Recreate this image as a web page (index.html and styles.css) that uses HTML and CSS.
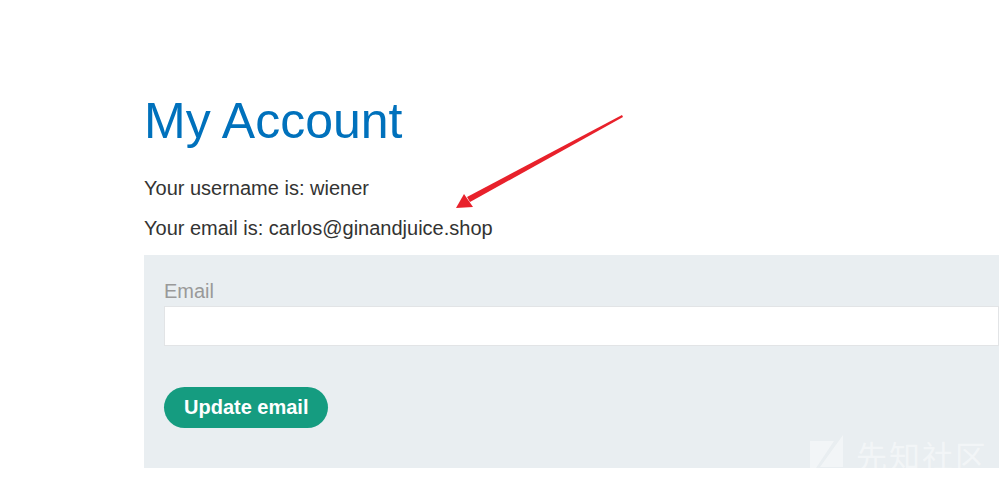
FILE: index.html
```html
<!DOCTYPE html>
<html>
<head>
<meta charset="utf-8">
<link rel="stylesheet" href="styles.css">
</head>
<body>
<div class="page">
  <h1 class="title">My Account</h1>
  <p class="info">Your username is: wiener</p>
  <p class="info">Your email is: carlos@ginandjuice.shop</p>
  <form class="panel">
    <label class="label" for="email">Email</label>
    <input class="input" id="email" type="email">
    <button class="btn" type="button">Update email</button>
  </form>
</div>
<svg class="arrow" width="999" height="478" viewBox="0 0 999 478">
  <polygon points="622,115 623,117 470,202 467,197" fill="#e8212b"/>
  <polygon points="456,208 464,194 473,207" fill="#e8212b"/>
</svg>
<div class="watermark">
  <svg class="wm-logo" width="34" height="40" viewBox="0 0 34 40">
    <polygon points="0,6 24,6 4,36 0,40" fill="#ffffff"/>
    <polygon points="33,0 33,32 10,32" fill="#ffffff"/>
  </svg>
  <span class="wm-text">先知社区</span>
</div>
</body>
</html>
```
FILE: styles.css
```css
html, body {
  margin: 0;
  padding: 0;
  overflow: hidden;
  background: #ffffff;
}
body {
  width: 999px;
  height: 478px;
  position: relative;
  font-family: "Liberation Sans", Arial, sans-serif;
  color: #333332;
}
.page {
  padding-top: 91px;
  padding-left: 144px;
  width: 900px;
}
.title {
  margin: 0 0 25px 0;
  font-size: 50px;
  line-height: 60px;
  font-weight: normal;
  color: #0071bc;
}
.info {
  margin: 0 0 16px 0;
  font-size: 20px;
  line-height: 24px;
}
.info + .info {
  margin-bottom: 15px;
}
.panel {
  display: flex;
  flex-direction: column;
  align-items: flex-start;
  background: #e9eef1;
  padding: 24px 20px 40px 20px;
  width: 860px;
}
.label {
  font-size: 20px;
  line-height: 24px;
  color: #999999;
  margin-bottom: 3px;
}
.input {
  box-sizing: border-box;
  width: 835px;
  height: 40px;
  margin: 0 0 41px 0;
  border: 1px solid #e2e4e6;
  background: #ffffff;
  padding: 0 10px;
  font-size: 16px;
}
.btn {
  height: 41px;
  padding: 0 20px;
  border: none;
  border-radius: 21px;
  background: #159c80;
  color: #ffffff;
  font-family: "Liberation Sans", Arial, sans-serif;
  font-weight: bold;
  font-size: 20px;
  line-height: 41px;
}
.arrow {
  position: absolute;
  left: 0;
  top: 0;
  pointer-events: none;
}
.watermark {
  position: absolute;
  left: 810px;
  top: 435px;
  display: flex;
  align-items: center;
  gap: 12px;
  opacity: 0.45;
}
.wm-text {
  font-family: "Noto Sans CJK SC", sans-serif;
  font-size: 31px;
  line-height: 36px;
  color: #ffffff;
  letter-spacing: 2px;
}
```
